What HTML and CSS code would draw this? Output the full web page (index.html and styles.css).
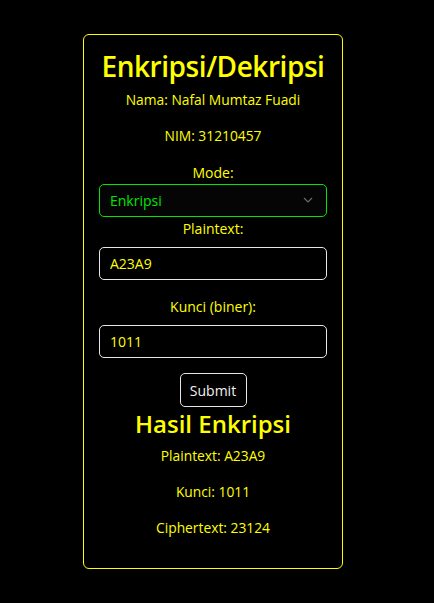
FILE: index.html
```html
<!DOCTYPE html>
<html lang="id">
<head>
<meta charset="utf-8">
<title>Enkripsi/Dekripsi</title>
<link rel="stylesheet" href="styles.css">
</head>
<body>
<div class="card">
  <h1 class="title">Enkripsi/Dekripsi</h1>
  <p class="info info-first">Nama: Nafal Mumtaz Fuadi</p>
  <p class="info">NIM: 31210457</p>
  <form class="form">
    <label class="label label-mode" for="mode">Mode:</label>
    <div class="select-wrap">
      <select id="mode" class="select">
        <option>Enkripsi</option>
        <option>Dekripsi</option>
      </select>
      <svg class="chevron" width="10" height="6" viewBox="0 0 10 6"><path d="M1 1 L5 5 L9 1" fill="none" stroke="#6a6a6a" stroke-width="1.2"/></svg>
    </div>
    <label class="label label-plain" for="plain">Plaintext:</label>
    <input id="plain" class="input" type="text" value="A23A9">
    <label class="label label-key" for="key">Kunci (biner):</label>
    <input id="key" class="input" type="text" value="1011">
    <button type="button" class="submit">Submit</button>
  </form>
  <h2 class="result-title">Hasil Enkripsi</h2>
  <p class="info result-first">Plaintext: A23A9</p>
  <p class="info">Kunci: 1011</p>
  <p class="info">Ciphertext: 23124</p>
</div>
</body>
</html>
```
FILE: styles.css
```css
* { box-sizing: border-box; }
html, body { background: #000; }
body {
  margin: 0;
  font-family: "Open Sans", "Noto Sans", sans-serif;
  color: #ffff00;
}
.card {
  width: 260px;
  margin: 34px 0 0 83px;
  border: 1px solid #ffff00;
  border-radius: 6px;
  padding: 14px 15px 30px;
  display: flex;
  flex-direction: column;
  align-items: center;
}
.title {
  margin: 0;
  font-size: 28px;
  line-height: 34px;
  font-weight: 600;
  letter-spacing: -0.45px;
}
.info {
  margin: 16px 0 0;
  font-size: 13.8px;
  line-height: 20px;
  text-align: center;
}
.info-first { margin-top: 7px; }
.form {
  width: 100%;
  display: flex;
  flex-direction: column;
  align-items: center;
  margin-top: 17px;
}
.label {
  font-size: 14px;
  line-height: 20px;
  display: block;
}
.select-wrap {
  position: relative;
  width: 100%;
  margin-top: 1px;
}
.select {
  display: block;
  width: 100%;
  height: 33px;
  appearance: none;
  -webkit-appearance: none;
  background: #050505;
  border: 1px solid #00e600;
  border-radius: 5px;
  color: #00e600;
  font-family: inherit;
  font-size: 14px;
  padding: 0 10px;
  outline: none;
}
.chevron {
  position: absolute;
  right: 14px;
  top: 13px;
}
.label-plain { margin-top: 2px; }
.input {
  display: block;
  width: 100%;
  height: 33px;
  margin-top: 8px;
  background: #000;
  border: 1px solid #e6e6e6;
  border-radius: 5px;
  color: #ffff00;
  font-family: inherit;
  font-size: 14px;
  padding: 0 10px;
  outline: none;
}
.label-key { margin-top: 17px; }
.submit {
  margin-top: 15px;
  width: 67px;
  height: 34px;
  background: #000;
  color: #f2f2f2;
  border: 1px solid #e6e6e6;
  border-radius: 5px;
  font-family: inherit;
  font-size: 14px;
  padding: 0;
}
.result-title {
  margin: 2px 0 0;
  font-size: 24px;
  line-height: 30px;
  font-weight: 600;
}
.result-first { margin-top: 7px; }
```
